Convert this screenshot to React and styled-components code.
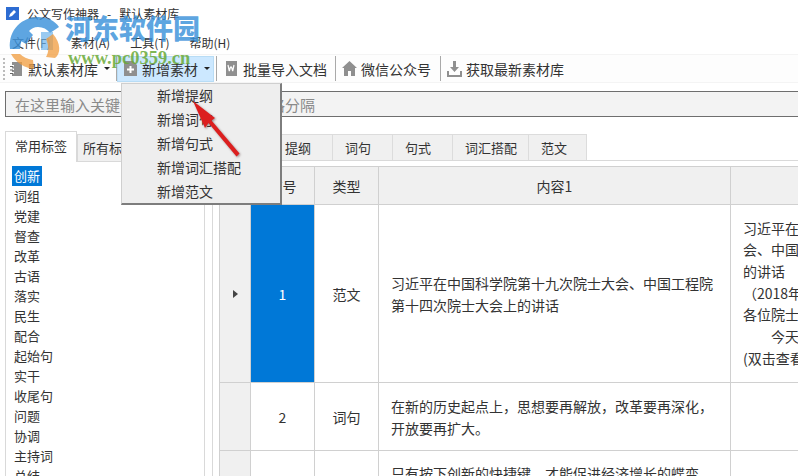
import styled, { createGlobalStyle } from "styled-components";

const GlobalStyle = createGlobalStyle`
  html, body {
    margin: 0;
    padding: 0;
    background: #fff;
    overflow: hidden;
  }
  body {
    font-family: "Noto Sans CJK SC", "Liberation Sans", sans-serif;
    color: #2b2b2b;
  }
`;

const Page = styled.div`
  position: relative;
  display: flex;
  flex-direction: column;
  width: 798px;
  height: 476px;
  overflow: hidden;
  background: #fff;
`;

const TitleBar = styled.div`
  display: flex;
  align-items: center;
  gap: 8px;
  height: 29px;
  padding: 0 0 2px 6px;
  box-sizing: border-box;
  font-size: 12px;
  color: #333;
  white-space: pre;
`;

const AppIcon = styled.div`
  display: flex;
  align-items: center;
  justify-content: center;
  width: 13px;
  height: 13px;
  background: #2d6cd2;
`;

const MenuBar = styled.div`
  display: flex;
  gap: 20px;
  height: 25px;
  align-items: center;
  padding: 2px 0 0 12px;
  box-sizing: border-box;
  font-size: 12px;
  color: #333;
`;

const Toolbar = styled.div`
  display: flex;
  align-items: center;
  height: 29px;
  padding-left: 3px;
  background: #fdfdfd;
  border-top: 1px solid #f4f4f4;
  border-bottom: 1px solid #f4f4f4;
  box-sizing: border-box;
`;

const Grip = styled.div`
  width: 2px;
  height: 22px;
  margin-right: 5px;
  background: repeating-linear-gradient(#bbb 0 2px, transparent 2px 4px);
`;

const ToolButton = styled.div`
  display: flex;
  align-items: center;
  gap: ${(p) => p.$gap || 5}px;
  height: 26px;
  padding: 0 ${(p) => p.$pr}px 0 ${(p) => p.$pl}px;
  font-size: 14px;
  color: #333;
  box-sizing: border-box;
  background: ${(p) => (p.$active ? "#cce8ff" : "transparent")};
  outline: ${(p) => (p.$active ? "1px solid #b8dcf5" : "none")};
  outline-offset: -1px;
`;

const Caret = styled.span`
  width: 0;
  height: 0;
  margin-left: 1px;
  border-left: 3px solid transparent;
  border-right: 3px solid transparent;
  border-top: 3px solid #222;
`;

const ToolSep = styled.div`
  width: 1px;
  height: 25px;
  margin-left: ${(p) => p.$ml || 0}px;
  background: #a9a9a9;
`;

const SearchRow = styled.div`
  padding: 8px 0 0 5px;
`;

const SearchBox = styled.div`
  display: flex;
  align-items: center;
  height: 26px;
  box-sizing: border-box;
  padding-left: 9px;
  border: 1px solid #6e6e6e;
  border-right: 0;
  background: #f3f3f3;
  color: #8a8a8a;
  font-size: 15px;
`;

const Body = styled.div`
  display: flex;
  flex: 1;
  min-height: 0;
  padding: 14px 0 0 5px;
`;

const LeftPanel = styled.div`
  display: flex;
  flex-direction: column;
  width: 200px;
  flex-shrink: 0;
`;

const LeftTabs = styled.div`
  display: flex;
  align-items: flex-end;
  height: 31px;
  font-size: 13px;
  color: #333;
`;

const LeftTab = styled.div`
  display: flex;
  align-items: center;
  justify-content: ${(p) => (p.$active ? "center" : "flex-start")};
  padding: 0 0 ${(p) => (p.$active ? 3 : 2)}px ${(p) => (p.$active ? 0 : 5)}px;
  box-sizing: border-box;
  width: ${(p) => p.$w}px;
  height: ${(p) => (p.$active ? 31 : 28)}px;
  background: ${(p) => (p.$active ? "#fff" : "#f0f0f0")};
  border: 1px solid #d9d9d9;
  border-bottom: ${(p) => (p.$active ? "0" : "1px solid #d9d9d9")};
`;

const TagList = styled.div`
  flex: 1;
  padding: 4px 0 0 6px;
  border-left: 1px solid #d9d9d9;
  border-right: 1px solid #d9d9d9;
`;

const Tag = styled.div`
  width: fit-content;
  height: 20px;
  padding: 0 ${(p) => (p.$active ? 2 : 0)}px;
  margin-left: ${(p) => (p.$active ? 0 : 2)}px;
  line-height: 20px;
  font-size: 13px;
  color: ${(p) => (p.$active ? "#fff" : "#333")};
  background: ${(p) => (p.$active ? "#0078d7" : "transparent")};
`;

const Splitter = styled.div`
  width: 7px;
  flex-shrink: 0;
  border-right: 1px solid #d9d9d9;
`;

const RightPanel = styled.div`
  display: flex;
  flex-direction: column;
  flex: 1;
  min-width: 0;
  margin-left: 6px;
`;

const RightTabs = styled.div`
  display: flex;
  height: 27px;
  margin-top: 3px;
  border-bottom: 1px solid #d9d9d9;
  box-sizing: border-box;
  font-size: 13px;
  color: #333;
`;

const RightTab = styled.div`
  display: flex;
  align-items: center;
  padding: 0 0 1px 12px;
  box-sizing: border-box;
  width: ${(p) => p.$w}px;
  background: #f0f0f0;
  border: 1px solid #dcdcdc;
  border-left: 0;
  border-bottom: 0;
`;

const GridWrap = styled.div`
  flex: 1;
  min-height: 0;
  margin-top: 5px;
  overflow: hidden;
  border-top: 1px solid #d0d0d0;
  border-left: 1px solid #d0d0d0;
`;

const Row = styled.div`
  display: grid;
  grid-template-columns: 31px 64px 64px 352px 120px;
  width: 631px;
  height: ${(p) => p.$h}px;
  box-sizing: border-box;
`;

const Cell = styled.div`
  display: flex;
  align-items: ${(p) => (p.$top ? "flex-start" : "center")};
  justify-content: ${(p) => (p.$text ? "flex-start" : "center")};
  padding: ${(p) => (p.$text ? "0 12px" : "0")};
  padding-top: ${(p) => (p.$pt ? p.$pt + "px" : "")};
  box-sizing: border-box;
  overflow: hidden;
  border-right: 1px solid #d0d0d0;
  border-bottom: 1px solid #d0d0d0;
  line-height: 22px;
  background: ${(p) => (p.$head ? "#f0f0f0" : p.$blue ? "#0078d7" : "#fff")};
  color: ${(p) => (p.$blue ? "#fff" : "#333")};
  font-size: 14px;
`;

const RowArrow = styled.span`
  width: 0;
  height: 0;
  border-top: 4px solid transparent;
  border-bottom: 4px solid transparent;
  border-left: 5px solid #444;
`;

const ClipText = styled.div`
  width: 400px;
  flex-shrink: 0;
  white-space: pre;
  line-height: 21.7px;
`;

const DropMenu = styled.div`
  position: absolute;
  left: 121px;
  top: 83px;
  width: 161px;
  height: 122px;
  box-sizing: border-box;
  padding-bottom: 2px;
  background: #eeeeee;
  border: 1px solid #cfcfcf;
  border-right: 2px solid #7d7d7d;
  border-bottom: 2px solid #7d7d7d;
`;

const DropItem = styled.div`
  display: flex;
  align-items: center;
  height: 24px;
  padding: 0 0 2px 35px;
  box-sizing: border-box;
  font-size: 14px;
  color: #333;
`;

const Watermark = styled.div`
  position: absolute;
  left: 5px;
  top: 12px;
  width: 205px;
  height: 60px;
  pointer-events: none;
`;

const WmTitle = styled.div`
  position: absolute;
  left: 60px;
  top: 0;
  font-weight: 900;
  font-size: 27px;
  line-height: 32px;
  color: rgba(58, 145, 218, 0.82);
  white-space: nowrap;
`;

const WmUrl = styled.div`
  position: absolute;
  left: 63px;
  top: 36px;
  font-family: "Liberation Serif", serif;
  font-weight: 700;
  font-size: 18.5px;
  line-height: 20px;
  color: rgba(105, 170, 55, 0.85);
  white-space: nowrap;
`;

const WmLogo = styled.svg`
  position: absolute;
  left: 0;
  top: 0;
`;

const RedArrow = styled.svg`
  position: absolute;
  left: 185px;
  top: 92px;
  pointer-events: none;
  filter: drop-shadow(1px 1px 1px rgba(90, 60, 60, 0.55));
`;

const tags = ["创新", "词组", "党建", "督查", "改革", "古语", "落实", "民生", "配合", "起始句", "实干", "收尾句", "问题", "协调", "主持词", "总结"];
const tabs = [["全部", 54], ["提纲", 60], ["词句", 60], ["句式", 60], ["词汇搭配", 76], ["范文", 58]];
const drops = ["新增提纲", "新增词句", "新增句式", "新增词汇搭配", "新增范文"];
const longText = `习近平在中国科学院第十九次院士大会、中国工程院
会、中国工程院第十四次院士大会上的讲话
的讲话
（2018年5月28日）
各位院士，同志们，朋友们：
　　今天，两院院士大会
(双击查看全文)`;

const BookIcon = () => (
  <svg width="13" height="16" viewBox="0 0 13 16">
    <path d="M2 1h10v14H2z" fill="#8f8f8f" />
    <path d="M0 4h4v1.500H0zM0 7.500h4V9H0zM0 11h4v1.500H0z" fill="#fff" />
    <path d="M0 5h3v1H0zM0 8.500h3v1H0zM0 12h3v1H0z" fill="#666" />
  </svg>
);
const AddIcon = () => (
  <svg width="13" height="15" viewBox="0 0 13 15">
    <path d="M0 0h9l4 4v11H0z" fill="#8f8f8f" />
    <path d="M5.500 5h2v2.500H10v2H7.500V12h-2V9.500H3v-2h2.500z" fill="#fff" />
  </svg>
);
const WordIcon = () => (
  <svg width="11" height="15" viewBox="0 0 11 15">
    <path d="M0 0h11v15H0z" fill="#8f8f8f" />
    <path d="M2 4l1.300 6 1.200-4h1l1.200 4L8 4" fill="none" stroke="#fff" strokeWidth="1.200" />
  </svg>
);
const HomeIcon = () => (
  <svg width="15" height="15" viewBox="0 0 15 15">
    <path d="M7.500 0L15 7h-2v8H9v-5H6v5H2V7H0z" fill="#8f8f8f" />
  </svg>
);
const DownloadIcon = () => (
  <svg width="15" height="16" viewBox="0 0 15 16">
    <path d="M6 0h3v6h3l-4.500 5L3 6h3z" fill="#8f8f8f" />
    <path d="M0 10h2v4h11v-4h2v6H0z" fill="#8f8f8f" />
  </svg>
);

export default function App() {
  return (
    <>
      <GlobalStyle />
      <Page>
        <TitleBar>
          <AppIcon>
            <svg width="9" height="9" viewBox="0 0 9 9">
              <path d="M1 8l1-3 4-4 2 2-4 4z" fill="#fff" />
            </svg>
          </AppIcon>
          <span>公文写作神器   -   默认素材库</span>
        </TitleBar>
        <MenuBar>
          <span>文件(F)</span>
          <span>素材(A)</span>
          <span>工具(T)</span>
          <span>帮助(H)</span>
        </MenuBar>
        <Toolbar>
          <Grip />
          <ToolButton $pl={0} $pr={6}>
            <BookIcon />
            默认素材库
            <Caret />
          </ToolButton>
          <ToolSep />
          <ToolButton $active $pl={7} $pr={4}>
            <AddIcon />
            新增素材
            <Caret />
          </ToolButton>
          <ToolSep $ml={2} />
          <ToolButton $pl={9} $pr={8} $gap={6}>
            <WordIcon />
            批量导入文档
          </ToolButton>
          <ToolSep />
          <ToolButton $pl={6} $pr={9} $gap={4}>
            <HomeIcon />
            微信公众号
          </ToolButton>
          <ToolSep />
          <ToolButton $pl={6} $pr={8} $gap={4}>
            <DownloadIcon />
            获取最新素材库
          </ToolButton>
        </Toolbar>
        <SearchRow>
          <SearchBox>在这里输入关键词，多个关键词请用空格分隔</SearchBox>
        </SearchRow>
        <Body>
          <LeftPanel>
            <LeftTabs>
              <LeftTab $active $w={72}>常用标签</LeftTab>
              <LeftTab $w={72}>所有标签</LeftTab>
            </LeftTabs>
            <TagList>
              {tags.map((t, i) => (
                <Tag key={t} $active={i === 0}>{t}</Tag>
              ))}
            </TagList>
          </LeftPanel>
          <Splitter />
          <RightPanel>
            <RightTabs>
              {tabs.map(([t, w]) => (
                <RightTab key={t} $w={w}>{t}</RightTab>
              ))}
            </RightTabs>
            <GridWrap>
              <Row $h={38}>
                <Cell $head />
                <Cell $head>序号</Cell>
                <Cell $head>类型</Cell>
                <Cell $head>内容1</Cell>
                <Cell $head />
              </Row>
              <Row $h={178}>
                <Cell $head><RowArrow /></Cell>
                <Cell $blue>1</Cell>
                <Cell>范文</Cell>
                <Cell $text>习近平在中国科学院第十九次院士大会、中国工程院第十四次院士大会上的讲话</Cell>
                <Cell $text><ClipText>{longText}</ClipText></Cell>
              </Row>
              <Row $h={68}>
                <Cell $head />
                <Cell>2</Cell>
                <Cell>词句</Cell>
                <Cell $text>在新的历史起点上，思想要再解放，改革要再深化，开放要再扩大。</Cell>
                <Cell />
              </Row>
              <Row $h={68}>
                <Cell $head />
                <Cell />
                <Cell />
                <Cell $text $top $pt={11}>只有按下创新的快捷键，才能促进经济增长的蝶变</Cell>
                <Cell />
              </Row>
            </GridWrap>
          </RightPanel>
        </Body>

        <DropMenu>
          {drops.map((d) => (
            <DropItem key={d}>{d}</DropItem>
          ))}
        </DropMenu>

        <RedArrow width="60" height="70" viewBox="0 0 60 70">
          <path d="M8 9L30 26l-3.500 2.500 28 33-3 3-28-33.500-3.500 5z" fill="#dc1f1f" />
        </RedArrow>

        <Watermark>
          <WmLogo width="60" height="60" viewBox="0 0 60 60">
            <path d="M5 37C3 17 18 5 33 5c10 0 17 4 21 10l-9 6c-3-4-7-6-12-6-4 0-7 2-9 4l4 4-7 9-5-3-1 8z" fill="rgba(58,145,218,0.82)" />
            <path d="M36 20h12v18H36z" fill="rgba(110,180,235,0.7)" />
            <path d="M48 22c8 9 8 20 2 24l-9-1c3-5 3-11 0-18z" fill="rgba(240,155,60,0.75)" />
            <path d="M6 42c5 9 14 14 23 15l-1-9c-6-1-10-3-13-6z" fill="rgba(240,155,60,0.75)" />
          </WmLogo>
          <WmTitle>河东软件园</WmTitle>
          <WmUrl>www.pc0359.cn</WmUrl>
        </Watermark>
      </Page>
    </>
  );
}
